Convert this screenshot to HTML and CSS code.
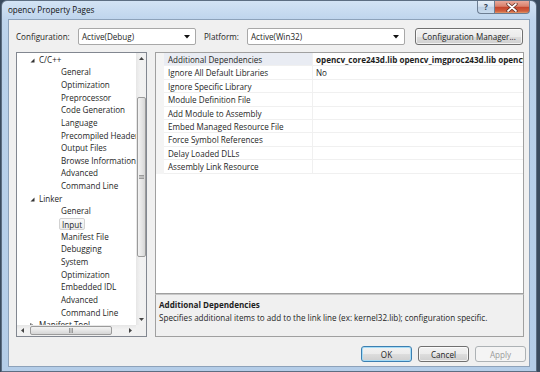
FILE: index.html
```html
<!DOCTYPE html>
<html>
<head>
<meta charset="utf-8">
<link rel="stylesheet" href="styles.css">
</head>
<body>
<div class="window">
  <div class="titlebar">
    <span class="title">opencv Property Pages</span>
    <div class="capbtns">
      <div class="cap help">?</div>
      <div class="cap close"><svg width="12" height="9" viewBox="0 0 12 9"><path d="M2 1 L10 8 M10 1 L2 8" stroke="#5a2a20" stroke-width="3.2" stroke-linecap="round"/><path d="M2 1 L10 8 M10 1 L2 8" stroke="#ffffff" stroke-width="1.7" stroke-linecap="round"/></svg></div>
    </div>
  </div>
  <div class="client">
    <div class="configrow">
      <span class="lbl lbl-config">Configuration:</span>
      <div class="combo combo-config"><span>Active(Debug)</span><svg class="dd" width="6" height="4" viewBox="0 0 6 4"><polygon points="0,0 6,0 3,3.5" fill="#111"/></svg></div>
      <span class="lbl lbl-platform">Platform:</span>
      <div class="combo combo-platform"><span>Active(Win32)</span><svg class="dd" width="6" height="4" viewBox="0 0 6 4"><polygon points="0,0 6,0 3,3.5" fill="#111"/></svg></div>
      <div class="btn btn-cfgmgr">Configuration Manager...</div>
    </div>
    <div class="main">
      <div class="tree">
        <div class="tree-list">
          <div class="node l1"><svg class="exp" width="5" height="5" viewBox="0 0 5 5"><polygon points="4.5,0.5 4.5,4.5 0.5,4.5" fill="#333"/></svg>C/C++</div>
          <div class="node l2">General</div>
          <div class="node l2">Optimization</div>
          <div class="node l2">Preprocessor</div>
          <div class="node l2">Code Generation</div>
          <div class="node l2">Language</div>
          <div class="node l2">Precompiled Headers</div>
          <div class="node l2">Output Files</div>
          <div class="node l2">Browse Information</div>
          <div class="node l2">Advanced</div>
          <div class="node l2">Command Line</div>
          <div class="node l1"><svg class="exp" width="5" height="5" viewBox="0 0 5 5"><polygon points="4.5,0.5 4.5,4.5 0.5,4.5" fill="#333"/></svg>Linker</div>
          <div class="node l2">General</div>
          <div class="node l2"><span class="sel">Input</span></div>
          <div class="node l2">Manifest File</div>
          <div class="node l2">Debugging</div>
          <div class="node l2">System</div>
          <div class="node l2">Optimization</div>
          <div class="node l2">Embedded IDL</div>
          <div class="node l2">Advanced</div>
          <div class="node l2">Command Line</div>
          <div class="node l1"><svg class="exp" width="5" height="5" viewBox="0 0 5 5"><polygon points="0.5,0.5 3.5,2.5 0.5,4.5" fill="none" stroke="#555" stroke-width="0.8"/></svg>Manifest Tool</div>
        </div>
        <div class="vscroll">
          <div class="sarrow"><svg width="5" height="3" viewBox="0 0 5 3"><polygon points="0,3 5,3 2.5,0" fill="#444"/></svg></div>
          <div class="vtrack">
            <div class="vthumb"><svg width="5" height="4" viewBox="0 0 5 4"><path d="M0 0.5H5M0 2H5M0 3.5H5" stroke="#888" stroke-width="0.8"/></svg></div>
          </div>
          <div class="sarrow"><svg width="5" height="3" viewBox="0 0 5 3"><polygon points="0,0 5,0 2.5,3" fill="#444"/></svg></div>
        </div>
        <div class="hscroll">
          <div class="sarrow"><svg width="3" height="5" viewBox="0 0 3 5"><polygon points="3,0 3,5 0,2.5" fill="#444"/></svg></div>
          <div class="htrack">
            <div class="hthumb"><svg width="4" height="5" viewBox="0 0 4 5"><path d="M0.5 0V5M2 0V5M3.5 0V5" stroke="#888" stroke-width="0.8"/></svg></div>
          </div>
          <div class="sarrow"><svg width="3" height="5" viewBox="0 0 3 5"><polygon points="0,0 0,5 3,2.5" fill="#444"/></svg></div>
        </div>
        <div class="corner"></div>
      </div>
      <div class="rightpane">
        <div class="grid">
          <div class="row selrow"><span class="gut"></span><span class="name">Additional Dependencies</span><span class="val bold">opencv_core243d.lib opencv_imgproc243d.lib opencv_highgui243d.lib</span></div>
          <div class="row"><span class="gut"></span><span class="name">Ignore All Default Libraries</span><span class="val">No</span></div>
          <div class="row"><span class="gut"></span><span class="name">Ignore Specific Library</span><span class="val"></span></div>
          <div class="row"><span class="gut"></span><span class="name">Module Definition File</span><span class="val"></span></div>
          <div class="row"><span class="gut"></span><span class="name">Add Module to Assembly</span><span class="val"></span></div>
          <div class="row"><span class="gut"></span><span class="name">Embed Managed Resource File</span><span class="val"></span></div>
          <div class="row"><span class="gut"></span><span class="name">Force Symbol References</span><span class="val"></span></div>
          <div class="row"><span class="gut"></span><span class="name">Delay Loaded DLLs</span><span class="val"></span></div>
          <div class="row"><span class="gut"></span><span class="name">Assembly Link Resource</span><span class="val"></span></div>
        </div>
        <div class="desc">
          <div class="desc-title">Additional Dependencies</div>
          <div class="desc-text">Specifies additional items to add to the link line (ex: kernel32.lib); configuration specific.</div>
        </div>
      </div>
    </div>
    <div class="buttons">
      <div class="btn btn-ok">OK</div>
      <div class="btn btn-cancel">Cancel</div>
      <div class="btn btn-apply">Apply</div>
    </div>
  </div>
</div>
</body>
</html>
```
FILE: styles.css
```css
* { box-sizing: border-box; }
html, body { margin: 0; padding: 0; }
body {
  width: 540px;
  height: 372px;
  overflow: hidden;
  background: #3a4b5e;
  font-family: "Open Sans", "Noto Sans", sans-serif;
  font-size: 8.1px;
  color: #1e1e1e;
}
.window {
  margin-left: 1px;
  width: 536px;
  height: 372px;
  border: 1px solid #5d6e82;
  border-radius: 6px 6px 0 0;
  background: linear-gradient(to bottom, #d3e3f4 0px, #bfd5ed 18px, #b9d1ea 60px, #b4cde8 372px);
  display: flex;
  flex-direction: column;
}
.titlebar {
  height: 18px;
  display: flex;
  align-items: flex-start;
}
.title {
  padding-left: 6px;
  line-height: 17px;
  color: #111;
}
.capbtns {
  margin-left: auto;
  margin-right: 6px;
  display: flex;
}
.cap {
  height: 13px;
  border: 1px solid #6d7e93;
  border-top: none;
  display: flex;
  align-items: center;
  justify-content: center;
}
.help {
  width: 17px;
  border-radius: 0 0 0 4px;
  border-right: none;
  background: linear-gradient(to bottom, #e7eff8 0%, #d3e0ef 45%, #bccee3 50%, #c8dbee 100%);
  color: #2c3c50;
  font-size: 8px;
  font-weight: bold;
  line-height: 12px;
}
.close {
  width: 36px;
  border-radius: 0 0 4px 0;
  background: linear-gradient(to bottom, #e9a99b 0%, #d9806b 45%, #c4432c 50%, #d0603f 85%, #e29a6c 100%);
}
.client {
  flex: 1;
  margin: 0 6px 4px 6px;
  border: 1px solid #8da2ba;
  background: #f0f0f0;
  padding: 8px 0 0 7px;
  display: flex;
  flex-direction: column;
}
.configrow {
  height: 17px;
  display: flex;
  align-items: center;
}
.lbl { white-space: nowrap; flex: none; }
.lbl-config { width: 62px; }
.lbl-platform { width: 43px; margin-left: 8px; }
.combo {
  flex: none;
  height: 17px;
  background: #ffffff;
  border: 1px solid #a8a8a8;
  border-radius: 2px;
  display: flex;
  align-items: center;
  padding-left: 3px;
  padding-right: 5px;
}
.combo span { flex: 1; }
.combo-config { width: 118px; }
.combo-platform { width: 158px; }
.btn {
  flex: none;
  height: 17px;
  border: 1px solid #707070;
  border-radius: 3px;
  background: linear-gradient(to bottom, #f2f2f2 0%, #ebebeb 50%, #dddddd 51%, #cfcfcf 100%);
  display: flex;
  align-items: center;
  justify-content: center;
  white-space: nowrap;
  box-shadow: inset 0 0 0 1px rgba(255,255,255,0.7);
}
.btn-cfgmgr { width: 108px; margin-left: 10px; }
.main {
  margin-top: 7px;
  height: 285px;
  display: flex;
  gap: 8px;
  margin-right: 5px;
}
.tree {
  flex: none;
  width: 131px;
  border: 1px solid #828790;
  background: #ffffff;
  display: grid;
  grid-template-columns: 119px 11px;
  grid-template-rows: 272px 11px;
  overflow: hidden;
}
.tree-list {
  min-width: 0;
  overflow: hidden;
  padding-top: 0.7px;
  white-space: nowrap;
}
.node {
  height: 12.65px;
  line-height: 12.65px;
  display: flex;
  align-items: center;
}
.node.l1 { padding-left: 22px; }
.node.l2 { padding-left: 44px; }
.exp { margin-right: 4px; margin-left: -9px; flex: none; }
.sel {
  padding: 0 2px;
  margin-left: -2px;
  height: 12px;
  line-height: 11px;
  border: 1px solid #d2d2d2;
  border-radius: 2px;
  background: linear-gradient(to bottom, #fafafa, #ececec);
}
.vscroll {
  background: linear-gradient(to right, #e6e6e6, #f2f2f2 40%, #f0f0f0);
  display: flex;
  flex-direction: column;
}
.sarrow {
  flex: none;
  width: 11px;
  height: 11px;
  display: flex;
  align-items: center;
  justify-content: center;
}
.vtrack { flex: 1; display: flex; flex-direction: column; }
.vthumb {
  margin-top: 33px;
  height: 160px;
  margin-left: 1px;
  width: 9px;
  border: 1px solid #9b9b9b;
  border-radius: 2px;
  background: linear-gradient(to right, #f3f3f3, #e6e6e6 50%, #d6d6d6);
  display: flex;
  align-items: center;
  justify-content: center;
}
.hscroll {
  background: linear-gradient(to bottom, #e6e6e6, #f2f2f2 40%, #f0f0f0);
  display: flex;
}
.htrack { flex: 1; display: flex; }
.hthumb {
  margin-left: 2px;
  width: 82px;
  height: 9px;
  margin-top: 1px;
  border: 1px solid #9b9b9b;
  border-radius: 2px;
  background: linear-gradient(to bottom, #f3f3f3, #e6e6e6 50%, #d6d6d6);
  display: flex;
  align-items: center;
  justify-content: center;
}
.corner { background: #f0f0f0; }
.rightpane {
  flex: 1;
  min-width: 0;
  display: flex;
  flex-direction: column;
}
.grid {
  flex: 1;
  border: 1px solid #a0a0a0;
  background: #ffffff;
  overflow: hidden;
}
.row {
  height: 13.4px;
  display: flex;
  white-space: nowrap;
}
.gut {
  width: 8px;
  flex: none;
  background: #f4f4f4;
}
.name {
  width: 149px;
  flex: none;
  padding-left: 4px;
  line-height: 13px;
  border-bottom: 1px solid #f0f0f0;
  border-right: 1px solid #f0f0f0;
  overflow: hidden;
}
.val {
  flex: 1;
  min-width: 0;
  padding-left: 3px;
  line-height: 13px;
  border-bottom: 1px solid #f0f0f0;
  overflow: hidden;
}
.bold { font-weight: bold; }
.selrow .name { background: #e9ecf3; }
.desc {
  flex: none;
  height: 43px;
  border: 1px solid #a0a0a0;
  border-top: 1px solid #c8c8c8;
  background: #f0f0f0;
  padding: 3px 0 0 3px;
}
.desc-title { font-weight: bold; line-height: 13px; }
.desc-text { line-height: 13px; }
.buttons {
  margin-top: 9px;
  display: flex;
  justify-content: flex-end;
  gap: 6px;
  padding-right: 3px;
}
.btn-ok, .btn-cancel, .btn-apply { width: 51px; height: 16px; }
.btn-ok {
  border-color: #3c7fb1;
  box-shadow: inset 0 0 0 1px #a6dcf6;
}
.btn-apply {
  border-color: #adb2b5;
  background: #f4f4f4;
  color: #9a9a9a;
  box-shadow: none;
}
```
